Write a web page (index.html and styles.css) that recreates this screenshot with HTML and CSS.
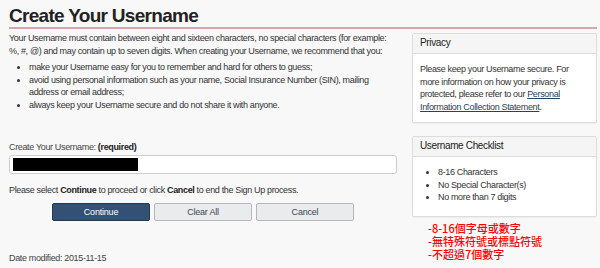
FILE: index.html
```html
<!DOCTYPE html>
<html lang="en">
<head>
    <meta charset="UTF-8">
    <title>Create Your Username</title>
    <link rel="stylesheet" href="styles.css">
</head>
<body>
    <main class="page">
        <h1 class="title">Create Your Username</h1>

        <div class="layout">
            <section class="main-col">
                <p class="intro">Your Username must contain between eight and sixteen characters, no special characters (for example: %, #, @) and may contain up to seven digits. When creating your Username, we recommend that you:</p>
                <ul class="tips">
                    <li>make your Username easy for you to remember and hard for others to guess;</li>
                    <li>avoid using personal information such as your name, Social Insurance Number (SIN), mailing address or email address;</li>
                    <li>always keep your Username secure and do not share it with anyone.</li>
                </ul>

                <label class="field-label">Create Your Username: <strong>(required)</strong></label>
                <div class="field"><span class="redacted"></span></div>

                <p class="hint">Please select <strong>Continue</strong> to proceed or click <strong>Cancel</strong> to end the Sign Up process.</p>

                <div class="actions">
                    <button class="btn btn-primary">Continue</button>
                    <button class="btn">Clear All</button>
                    <button class="btn">Cancel</button>
                </div>

                <p class="modified">Date modified: 2015-11-15</p>
            </section>

            <aside class="side-col">
                <div class="panel">
                    <h2 class="panel-head">Privacy</h2>
                    <div class="panel-body">
                        <p>Please keep your Username secure. For more information on how your privacy is protected, please refer to our <a href="#">Personal Information Collection Statement</a>.</p>
                    </div>
                </div>

                <div class="panel">
                    <h2 class="panel-head">Username Checklist</h2>
                    <div class="panel-body">
                        <ul class="checklist">
                            <li>8-16 Characters</li>
                            <li>No Special Character(s)</li>
                            <li>No more than 7 digits</li>
                        </ul>
                    </div>
                </div>

                <div class="note">
                    <p>-8-16個字母或數字</p>
                    <p>-無特殊符號或標點符號</p>
                    <p>-不超過7個數字</p>
                </div>
            </aside>
        </div>
    </main>
</body>
</html>
```
FILE: styles.css
```css
body {
    margin: 0;
    background: #f8f8f8;
    color: #333;
    font-family: "Liberation Sans", Arial, sans-serif;
    font-size: 9px;
    letter-spacing: -0.35px;
    line-height: 12.5px;
}
.page {
    padding: 0 3px 0 9px;
}
.title {
    margin: 5px 0 0;
    font-size: 19px;
    line-height: 22px;
    letter-spacing: -0.7px;
    color: #222;
    border-bottom: 2px solid #d7a7aa;
}
.layout {
    display: grid;
    grid-template-columns: 388px 185px;
    column-gap: 15px;
    margin-top: 4px;
}
p {
    margin: 0;
}
.intro {
    margin: -1px 0 4px;
}
.tips {
    margin: 0;
    padding-left: 20px;
}
.field-label {
    display: block;
    margin-top: 30px;
    color: #444;
}
.field-label strong {
    color: #222;
}
.field {
    margin-top: 1px;
    height: 19px;
    background: #fff;
    border: 1px solid #ccc;
    border-radius: 3px;
    padding: 2px 0 0 3px;
    box-sizing: border-box;
}
.redacted {
    display: block;
    width: 125px;
    height: 13px;
    background: #000;
}
.hint {
    margin-top: 10px;
}
.hint strong {
    color: #222;
}
.actions {
    display: flex;
    justify-content: center;
    gap: 4px;
    margin-top: 7px;
}
.btn {
    width: 98px;
    height: 18px;
    padding: 0;
    font-family: inherit;
    font-size: 9px;
    letter-spacing: -0.2px;
    color: #3a4659;
    background: #eaebed;
    border: 1px solid #b4b8be;
    border-radius: 2px;
}
.btn-primary {
    color: #fff;
    background: #335075;
    border-color: #22395a;
}
.modified {
    margin-top: 31px;
    color: #444;
}
.panel {
    background: #fff;
    border: 1px solid #ddd;
    border-radius: 2px;
    box-shadow: 0 1px 1px rgba(0, 0, 0, 0.05);
}
.panel + .panel {
    margin-top: 13px;
}
.panel-head {
    margin: 0;
    padding: 3px 7px 4px;
    font-size: 10px;
    font-weight: normal;
    line-height: 12px;
    letter-spacing: -0.35px;
    color: #222;
    background: #f5f5f5;
    border-bottom: 1px solid #ddd;
}
.panel-body {
    padding: 9px 7px 9px;
}
.panel-body a {
    color: #284162;
}
.checklist {
    margin: 0 0 3px;
    padding-left: 18px;
}
.note {
    margin: 5px 0 0 16px;
    font-family: "Noto Sans CJK TC", sans-serif;
    font-size: 11px;
    font-weight: 500;
    letter-spacing: 0;
    line-height: 13px;
    color: #f00;
}
```
